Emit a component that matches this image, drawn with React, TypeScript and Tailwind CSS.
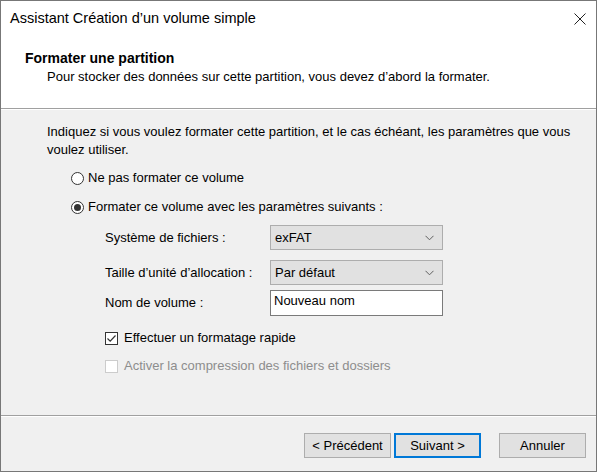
import { useState } from "react";

function Chevron() {
  return (
    <svg width="9" height="6" viewBox="0 0 9 6" className="absolute right-[8px] top-1/2 -translate-y-1/2">
      <path d="M0.5 0.8 L4.5 4.8 L8.5 0.8" fill="none" stroke="#606060" strokeWidth="1" />
    </svg>
  );
}

function Select({ value }: { value: string }) {
  return (
    <div className="relative h-[25px] w-[173px] border border-[#adadad] bg-[#e1e1e1] pl-[4px] leading-[23px]">
      {value}
      <Chevron />
    </div>
  );
}

function Radio({ checked, label }: { checked?: boolean; label: string }) {
  return (
    <div className="flex h-[20px] items-center">
      <span className="flex h-[13px] w-[13px] items-center justify-center rounded-full border border-[#333] bg-white">
        {checked && <span className="h-[7px] w-[7px] rounded-full bg-[#333]" />}
      </span>
      <span className="ml-[4px]">{label}</span>
    </div>
  );
}

function Checkbox({ checked, disabled, label }: { checked?: boolean; disabled?: boolean; label: string }) {
  return (
    <div className={`flex h-[20px] items-center ${disabled ? "text-[#8d8d8d]" : ""}`}>
      <span
        className={`flex h-[13px] w-[13px] items-center justify-center border bg-white ${
          disabled ? "border-[#cccccc]" : "border-[#333]"
        }`}
      >
        {checked && (
          <svg width="11" height="11" viewBox="0 0 11 11">
            <path d="M1.5 5.5 L4.2 8.2 L9.5 2.5" fill="none" stroke="#333" strokeWidth="1.2" />
          </svg>
        )}
      </span>
      <span className="ml-[6px]">{label}</span>
    </div>
  );
}

function Button({ label, primary }: { label: string; primary?: boolean }) {
  return (
    <button
      className={`h-[25px] w-[87px] bg-[#e1e1e1] text-black ${
        primary ? "border-2 border-[#0078d7]" : "border border-[#adadad]"
      }`}
    >
      {label}
    </button>
  );
}

export default function App() {
  const [name] = useState("Nouveau nom");

  return (
    <div
      className="h-[473px] w-[600px] bg-[#ffffff] text-[13px] text-black"
      style={{ fontFamily: '"Liberation Sans", Arial, sans-serif' }}
    >
      <div className="flex h-[472px] w-[597px] flex-col border border-[#777777] bg-[#f0f0f0]">
        {/* Title bar */}
        <div className="flex h-[36px] shrink-0 items-center justify-between bg-white pl-[9px] pr-[9px]">
          <span className="text-[14.5px]">Assistant Création d’un volume simple</span>
          <svg width="12" height="12" viewBox="0 0 12 12" className="mr-[1px]">
            <path d="M0.5 0.5 L11.5 11.5 M11.5 0.5 L0.5 11.5" stroke="#222" strokeWidth="1" />
          </svg>
        </div>

        {/* Header */}
        <div className="h-[72px] shrink-0 border-b border-[#a0a0a0] bg-white pl-[24px] pt-[13px]">
          <div className="text-[14px] font-bold leading-[16px]">Formater une partition</div>
          <div className="ml-[22px] mt-[3px] leading-[16px]">
            Pour stocker des données sur cette partition, vous devez d’abord la formater.
          </div>
        </div>
        <div className="h-px shrink-0 bg-white" />

        {/* Body */}
        <div className="flex-1 pl-[46px] pt-[13px]">
          <p className="leading-[18px]">
            Indiquez si vous voulez formater cette partition, et le cas échéant, les paramètres que vous
            <br />
            voulez utiliser.
          </p>

          <div className="ml-[24px] mt-[9px] flex flex-col gap-[9px]">
            <Radio label="Ne pas formater ce volume" />
            <Radio checked label="Formater ce volume avec les paramètres suivants :" />
          </div>

          <div className="ml-[58px] mt-[8px] flex flex-col">
            <div className="flex items-center">
              <span className="w-[165px]">Système de fichiers :</span>
              <Select value="exFAT" />
            </div>
            <div className="mt-[10px] flex items-center">
              <span className="w-[165px]">Taille d’unité d’allocation :</span>
              <Select value="Par défaut" />
            </div>
            <div className="mt-[5px] flex items-center">
              <span className="w-[165px]">Nom de volume :</span>
              <div className="h-[26px] w-[173px] border border-[#7a7a7a] bg-white pl-[3px] leading-[20px]">
                {name}
              </div>
            </div>
          </div>

          <div className="ml-[58px] mt-[12px] flex flex-col gap-[8px]">
            <Checkbox checked label="Effectuer un formatage rapide" />
            <Checkbox disabled label="Activer la compression des fichiers et dossiers" />
          </div>
        </div>

        {/* Footer */}
        <div className="h-px shrink-0 bg-[#a0a0a0]" />
        <div className="h-px shrink-0 bg-white" />
        <div className="flex h-[54px] shrink-0 items-start justify-end gap-[3px] pr-[10px] pt-[16px]">
          <Button label="< Précédent" />
          <Button primary label="Suivant >" />
          <div className="w-[12px]" />
          <Button label="Annuler" />
        </div>
      </div>
    </div>
  );
}
